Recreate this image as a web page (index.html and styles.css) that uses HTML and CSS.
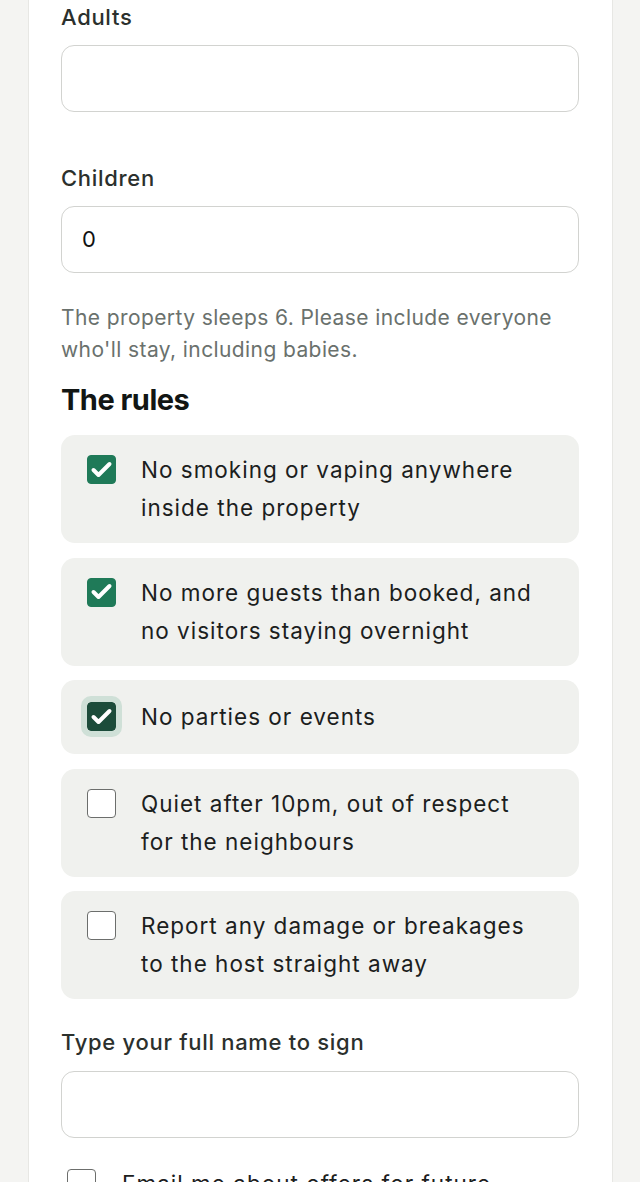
FILE: index.html
```html
<!DOCTYPE html>
<html lang="en">
<head>
<meta charset="utf-8">
<title>Booking form</title>
<link rel="stylesheet" href="styles.css">
</head>
<body>
<main class="card">
  <div class="field">
    <label class="label" for="adults">Adults</label>
    <div class="input" id="adults"></div>
  </div>
  <div class="field">
    <label class="label" for="children">Children</label>
    <div class="input" id="children">0</div>
  </div>
  <p class="help">The property sleeps 6. Please include everyone who'll stay, including babies.</p>
  <h2 class="heading">The rules</h2>
  <ul class="rules">
    <li class="rule">
      <span class="box checked"><svg viewBox="0 0 29 29"><path d="M6.5 15 L11.5 20 L22.5 9"/></svg></span>
      <span class="rule-text">No smoking or vaping anywhere inside the property</span>
    </li>
    <li class="rule">
      <span class="box checked"><svg viewBox="0 0 29 29"><path d="M6.5 15 L11.5 20 L22.5 9"/></svg></span>
      <span class="rule-text">No more guests than booked, and no visitors staying overnight</span>
    </li>
    <li class="rule">
      <span class="box checked focused"><svg viewBox="0 0 29 29"><path d="M6.5 15 L11.5 20 L22.5 9"/></svg></span>
      <span class="rule-text">No parties or events</span>
    </li>
    <li class="rule">
      <span class="box"></span>
      <span class="rule-text">Quiet after 10pm, out of respect for the neighbours</span>
    </li>
    <li class="rule">
      <span class="box"></span>
      <span class="rule-text">Report any damage or breakages to the host straight away</span>
    </li>
  </ul>
  <div class="field sign">
    <label class="label" for="name">Type your full name to sign</label>
    <div class="input" id="name"></div>
  </div>
  <div class="optin">
    <span class="box"></span>
    <span class="rule-text">Email me about offers for future stays</span>
  </div>
</main>
</body>
</html>
```
FILE: styles.css
```css
* { box-sizing: border-box; }
html, body { margin: 0; padding: 0; }
body {
  background: #f4f4f2;
  font-family: Inter, "Noto Sans", "Liberation Sans", sans-serif;
  color: #1b201d;
  overflow: hidden;
  height: 1182px;
}
.card {
  width: 585px;
  margin: 0 0 0 28px;
  background: #ffffff;
  border-left: 1px solid #e7e7e4;
  border-right: 1px solid #e7e7e4;
  padding: 3px 33px 40px 32px;
  min-height: 1182px;
}
.field { display: flex; flex-direction: column; gap: 14px; }
.field + .field { margin-top: 52px; }
.label {
  font-size: 22px;
  line-height: 28px;
  font-weight: 500;
  letter-spacing: 0.7px;
  color: #2b302d;
}
.input {
  height: 67px;
  border: 1.5px solid #d2d3d0;
  border-radius: 13px;
  background: #fff;
  padding: 0 20px;
  font-size: 22px;
  line-height: 64px;
  color: #111;
}
.help {
  margin: 29px 0 0;
  font-size: 21px;
  line-height: 32px;
  color: #6a716d;
  letter-spacing: 0.4px;
}
.heading {
  margin: 17px 0 0;
  font-size: 29px;
  line-height: 34px;
  font-weight: 700;
  letter-spacing: -0.5px;
  color: #121614;
}
.rules {
  list-style: none;
  margin: 18px 0 0;
  padding: 0;
  display: flex;
  flex-direction: column;
  gap: 14.5px;
}
.rule {
  display: grid;
  grid-template-columns: 29px 1fr;
  column-gap: 25px;
  align-items: start;
  align-content: center;
  min-height: 74px;
  padding: 16px 36px 16px 26px;
  background: #f0f1ee;
  border-radius: 14px;
}
.rule-text {
  font-size: 22.5px;
  line-height: 38px;
  letter-spacing: 1px;
  color: #1b201d;
}
.box {
  width: 29px;
  height: 29px;
  margin-top: 4px;
  border: 1.5px solid #6c6e6c;
  border-radius: 4px;
  background: #fff;
  display: block;
}
.box.checked {
  background: #1f7a58;
  border-color: #1f7a58;
}
.box.checked.focused {
  background: #1c4c3a;
  border-color: #1c4c3a;
  outline: 6.5px solid #cfe0d7;
  outline-offset: 0;
}
.box svg { display: block; margin: -1.5px; width: 29px; height: 29px; }
.box svg path {
  fill: none;
  stroke: #ffffff;
  stroke-width: 4;
  stroke-linecap: round;
  stroke-linejoin: round;
}
.sign { margin-top: 29px; gap: 15px; }
.optin {
  display: grid;
  grid-template-columns: 29px 1fr;
  column-gap: 26px;
  align-items: start;
  margin-top: 27px;
  padding: 0 36px 0 6px;
}
```
